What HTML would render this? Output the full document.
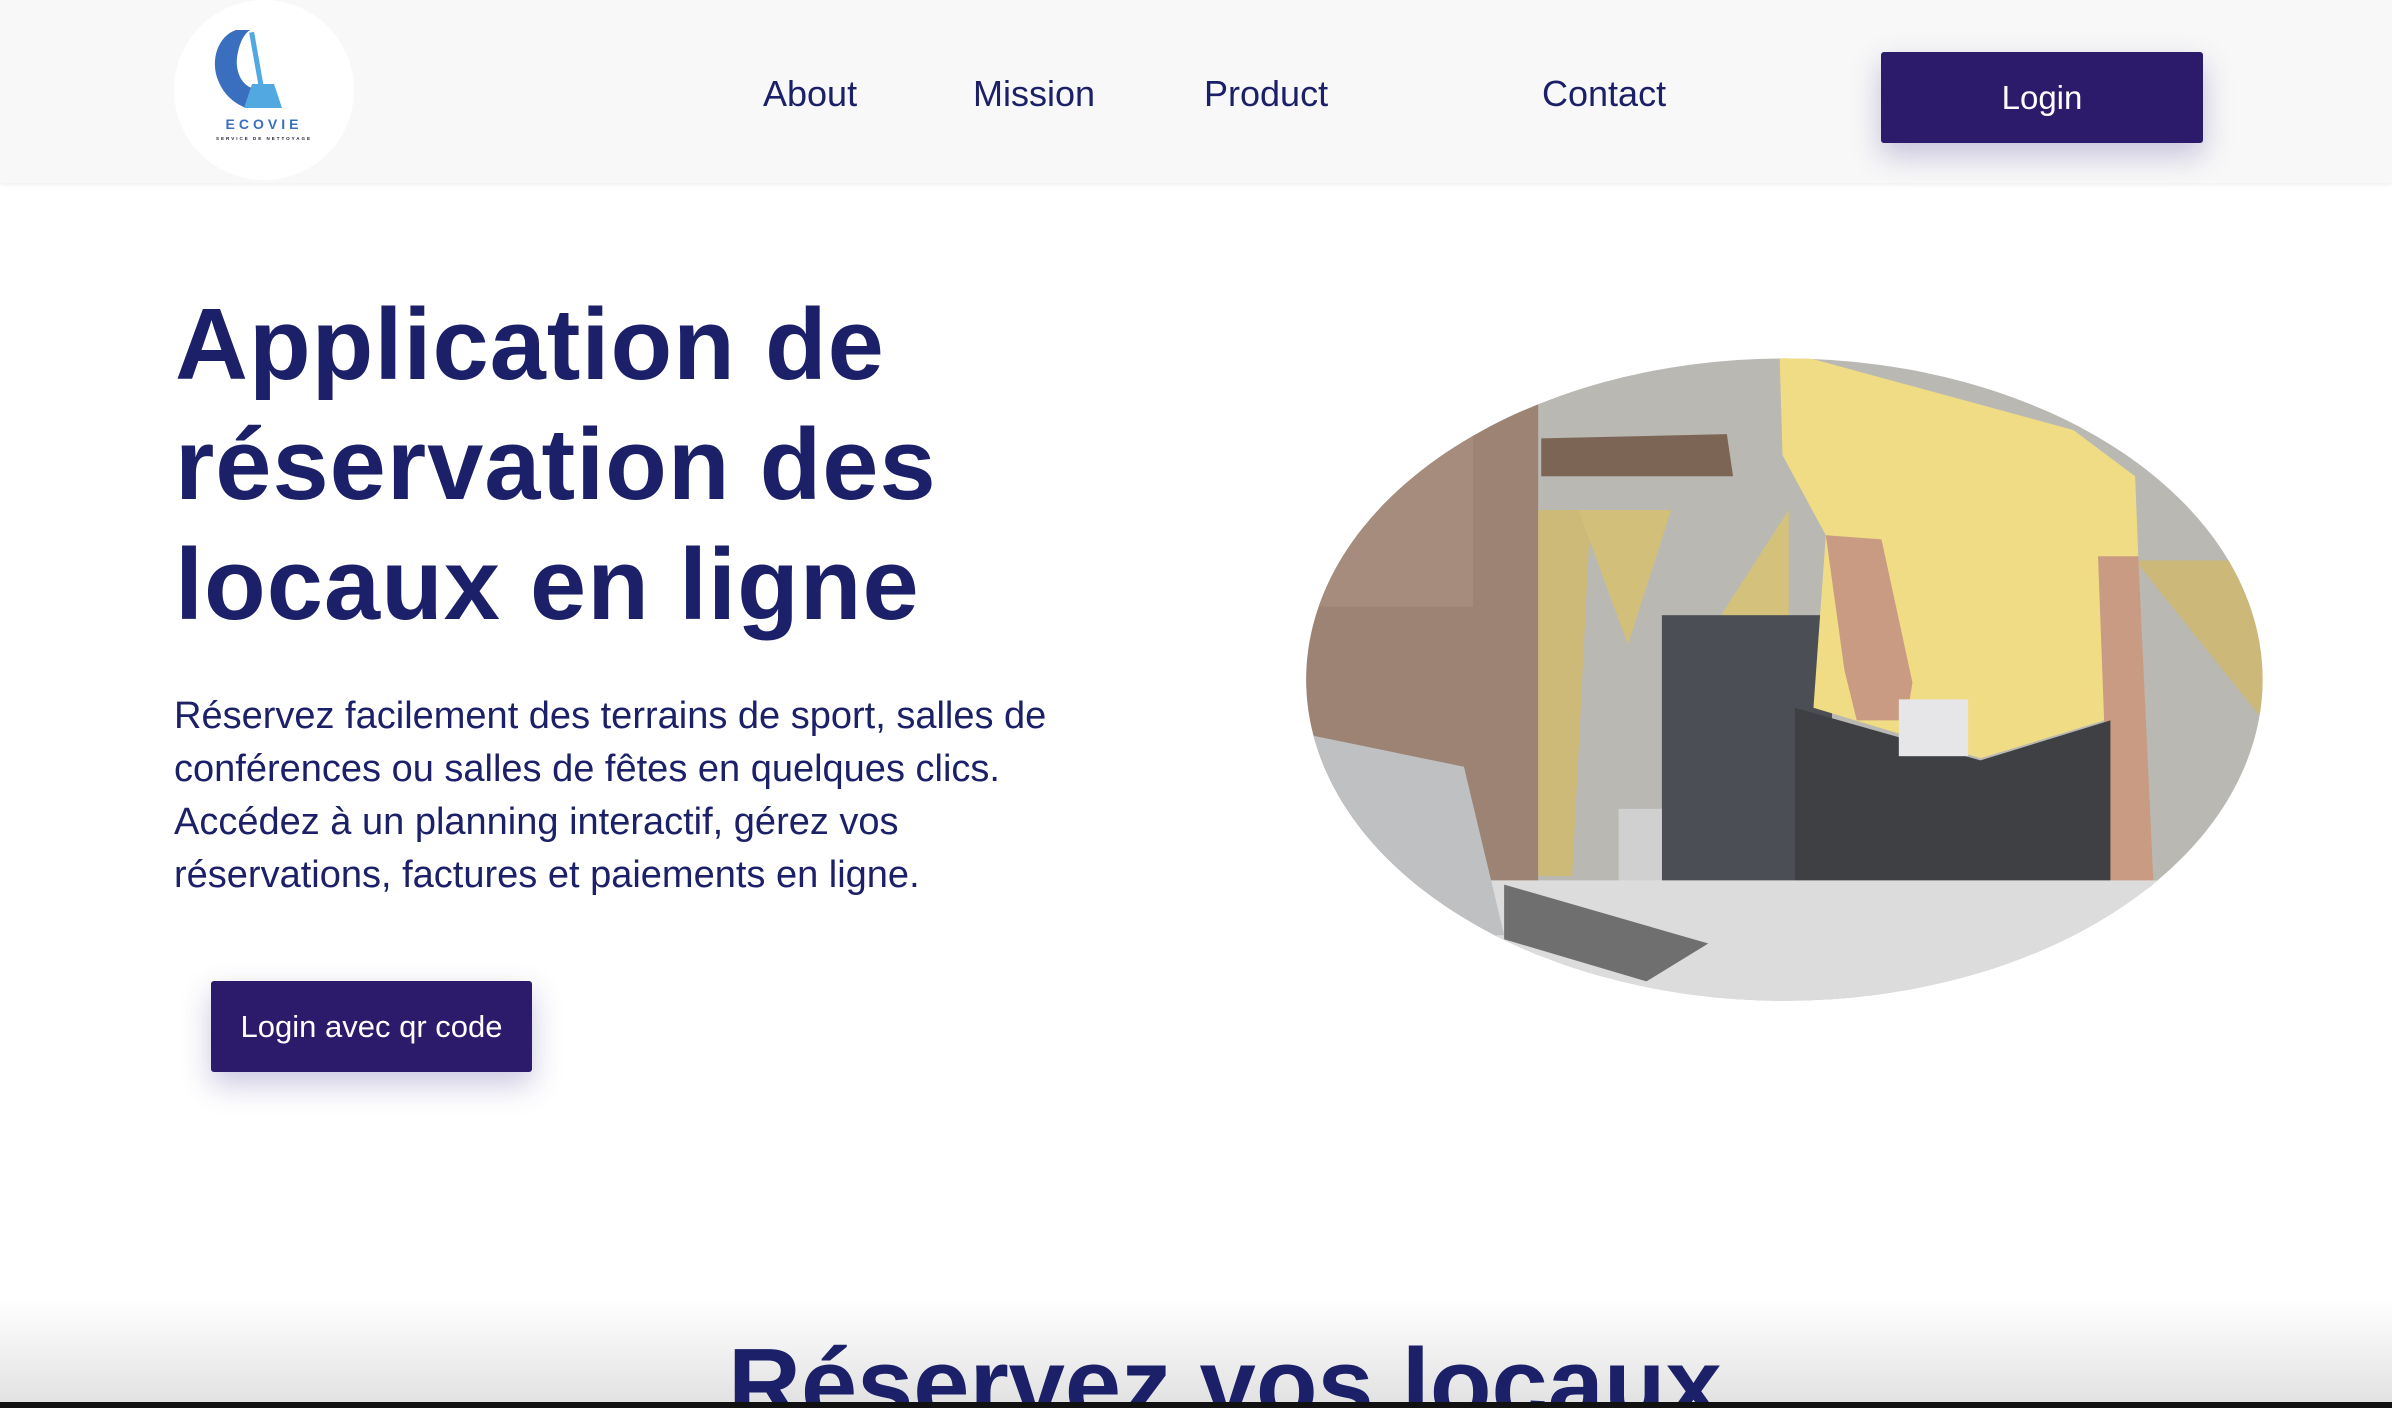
<!DOCTYPE html>
<html><head><meta charset="utf-8"><style>
*{margin:0;padding:0;box-sizing:border-box}
html,body{width:2392px;height:1408px;overflow:hidden}
body{background:#fff;font-family:"Liberation Sans",sans-serif;position:relative}
.hdr{position:absolute;left:0;top:0;width:2392px;height:183px;background:#f8f8f8;box-shadow:0 2px 4px rgba(0,0,0,.06)}
.logo{position:absolute;left:174px;top:0;width:180px;height:180px;border-radius:50%;background:#fff}
.nav{position:absolute;top:73px;font-size:36px;color:#1b2068}
.btn{position:absolute;background:#2c1a6b;color:#fff;display:flex;align-items:center;justify-content:center;border-radius:3px;box-shadow:0 12px 30px rgba(60,50,140,.28)}
h1{position:absolute;left:175px;top:285px;font-size:101px;line-height:120px;color:#1b2068;font-weight:bold;letter-spacing:1px}
p{position:absolute;left:174px;top:690px;font-size:38px;line-height:53px;color:#1b2068;white-space:nowrap}
.bot{position:absolute;left:0;top:1300px;width:2392px;height:102px;background:linear-gradient(#fff,#e2e2e2);overflow:hidden}
.bot h2{position:absolute;left:728px;top:30px;font-size:101px;font-weight:bold;color:#1b2068;line-height:110px;white-space:nowrap}
.bar{position:absolute;left:0;top:1402px;width:2392px;height:6px;background:#111}
</style></head><body>
<div class="hdr">
<div class="logo">
<svg width="180" height="180" viewBox="0 0 180 180">
<path d="M62 30 C44 36 36 60 44 80 C50 96 62 104 72 108 L78 88 C66 84 60 68 64 52 C66 42 70 34 76 30 Z" fill="#3a6fc0"/>
<rect x="80" y="32" width="5" height="58" fill="#52a8e0" transform="rotate(-10 82 60)"/>
<path d="M70 108 L78 84 L100 84 L108 108 Z" fill="#52a8e0"/>
<text x="90" y="129" text-anchor="middle" font-size="14" font-weight="bold" fill="#3a6fc0" letter-spacing="4">ECOVIE</text>
<text x="90" y="140" text-anchor="middle" font-size="4.5" font-weight="bold" fill="#223" letter-spacing="2">SERVICE DE NETTOYAGE</text>
</svg></div>
<div class="nav" style="left:763px">About</div>
<div class="nav" style="left:973px">Mission</div>
<div class="nav" style="left:1204px">Product</div>
<div class="nav" style="left:1542px">Contact</div>
<div class="btn" style="left:1881px;top:52px;width:322px;height:91px;font-size:33px">Login</div>
</div>
<h1>Application de<br>réservation des<br>locaux en ligne</h1>
<p>Réservez facilement des terrains de sport, salles de<br>conférences ou salles de fêtes en quelques clics.<br>Accédez à un planning interactif, gérez vos<br>réservations, factures et paiements en ligne.</p>
<div class="btn" style="left:211px;top:981px;width:321px;height:91px;font-size:31px">Login avec qr code</div>
<svg style="position:absolute;left:1300px;top:350px" width="970" height="660" viewBox="0 0 1568 1568" preserveAspectRatio="none">
<defs><clipPath id="c"><ellipse cx="783" cy="783" rx="773" ry="763"/></clipPath></defs>
<g clip-path="url(#c)">
<rect width="1568" height="1568" fill="#b9b8b3"/>
<rect width="385" height="1568" fill="#9c8373"/>
<rect x="30" y="150" width="250" height="460" fill="#a58c7c"/>
<polygon points="385,380 470,380 440,1250 385,1250" fill="#cdb978"/>
<polygon points="450,380 600,380 530,700" fill="#d2bf7a"/>
<polygon points="650,700 790,380 790,700" fill="#d4c27c"/>
<polygon points="1350,500 1568,500 1568,900" fill="#ccb878"/>
<polygon points="390,210 690,200 700,300 390,300" fill="#7d6555"/>
<rect x="585" y="630" width="275" height="640" fill="#4b4f55"/>
<rect x="515" y="1090" width="70" height="180" fill="#d0d0d0"/>
<polygon points="775,0 1250,190 1350,300 1355,490 1300,880 1100,970 830,850 850,440 780,250" fill="#f0dc84"/>
<polygon points="850,440 940,450 990,790 980,880 900,880 880,760" fill="#c99b82"/>
<polygon points="1290,490 1355,490 1380,1280 1310,1280" fill="#c99b82"/>
<polygon points="800,850 1100,975 1310,880 1310,1280 800,1280" fill="#3f4043"/>
<rect x="968" y="830" width="112" height="135" fill="#e6e6e8"/>
<rect x="0" y="1260" width="1568" height="308" fill="#dcdcdc"/>
<polygon points="0,910 265,990 330,1390 0,1400" fill="#bfc0c2"/>
<polygon points="330,1270 660,1410 560,1500 330,1400" fill="#6f6f70"/>
</g></svg>
<div class="bot"><h2>Réservez vos locaux</h2></div>
<div class="bar"></div>
</body></html>
